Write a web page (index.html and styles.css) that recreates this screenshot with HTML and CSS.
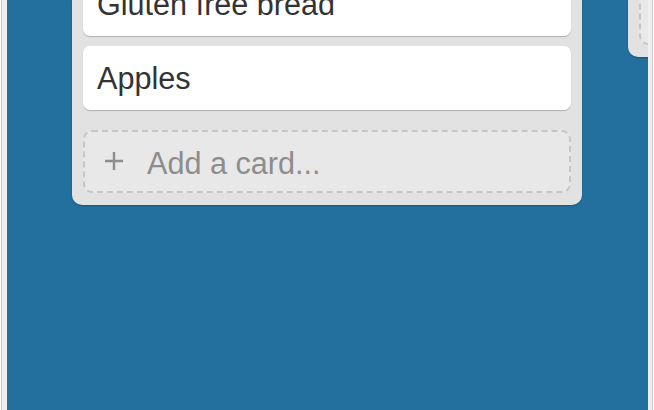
FILE: index.html
```html
<!DOCTYPE html>
<html>
<head>
<meta charset="utf-8">
<link rel="stylesheet" href="styles.css">
</head>
<body>
<div class="frame">
  <div class="board">
    <div class="list">
      <div class="card card-first">Gluten free bread</div>
      <div class="card">Apples</div>
      <div class="add-card">
        <svg class="plus" width="20" height="20" viewBox="0 0 20 20"><path d="M10 1v18M1 10h18" stroke="#8d8d8d" stroke-width="2.4" fill="none"/></svg>
        <span>Add a card...</span>
      </div>
    </div>
    <div class="list list-short">
      <div class="add-card add-card-cut">
        <svg class="plus" width="20" height="20" viewBox="0 0 20 20"><path d="M10 1v18M1 10h18" stroke="#8d8d8d" stroke-width="2.4" fill="none"/></svg>
        <span>Add a card...</span>
      </div>
    </div>
  </div>
</div>
</body>
</html>
```

FILE: styles.css
```css
html, body {
  margin: 0;
  padding: 0;
  height: 100%;
  background: #ffffff;
}
body {
  padding: 0 1px;
  box-sizing: border-box;
  font-family: "Liberation Sans", Arial, sans-serif;
}
.frame {
  height: 100%;
  box-sizing: border-box;
  border-left: 1px solid #c9c9c9;
  border-right: 1px solid #c9c9c9;
  background: #efefef;
  padding: 0 4px 0 5px;
}
.board {
  height: 100%;
  background: #23709f;
  overflow: hidden;
  display: flex;
  align-items: flex-start;
  gap: 46px;
  padding-left: 65px;
}
.list {
  flex: 0 0 510px;
  width: 510px;
  box-sizing: border-box;
  background: #e2e2e2;
  border-radius: 0 0 10px 10px;
  padding: 0 11px 12px;
  display: flex;
  flex-direction: column;
  box-shadow: 0 1px 2px rgba(0, 0, 0, 0.25);
}
.card {
  background: #ffffff;
  border-radius: 7px;
  box-shadow: 0 1px 1px rgba(0, 0, 0, 0.22);
  color: #333333;
  font-size: 30.6px;
  line-height: 36px;
  padding: 14px 14px 14px;
  margin-bottom: 10px;
  white-space: nowrap;
}
.card-first {
  margin-top: -28px;
}
.add-card {
  margin-top: 10px;
  border: 2px dashed #c6c6c6;
  border-radius: 9px;
  background: #e8e8e8;
  color: #8d8d8d;
  font-size: 30.6px;
  line-height: 36px;
  padding: 13px 19px 10px;
  display: flex;
  align-items: center;
  gap: 23px;
  white-space: nowrap;
}
.plus {
  flex: none;
  margin-top: -4px;
}
.add-card-cut {
  margin-top: -18px;
}
```
